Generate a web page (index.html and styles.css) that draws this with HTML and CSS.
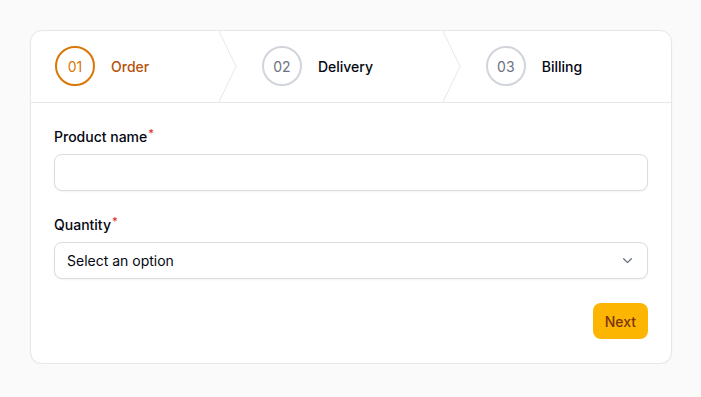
FILE: index.html
```html
<!DOCTYPE html>
<html lang="en">
<head>
    <meta charset="UTF-8">
    <title>Order wizard</title>
    <link rel="stylesheet" href="styles.css">
</head>
<body>
<div class="wizard">
    <ol class="steps">
        <li class="step active">
            <span class="num">01</span>
            <span class="step-label">Order</span>
            <svg class="sep" fill="none" preserveAspectRatio="none" viewBox="0 0 22 80"><path d="M0 -2L20 40L0 82" stroke="currentColor" stroke-linejoin="round" vector-effect="non-scaling-stroke"></path></svg>
        </li>
        <li class="step">
            <span class="num">02</span>
            <span class="step-label">Delivery</span>
            <svg class="sep" fill="none" preserveAspectRatio="none" viewBox="0 0 22 80"><path d="M0 -2L20 40L0 82" stroke="currentColor" stroke-linejoin="round" vector-effect="non-scaling-stroke"></path></svg>
        </li>
        <li class="step">
            <span class="num">03</span>
            <span class="step-label">Billing</span>
        </li>
    </ol>

    <form class="body" onsubmit="return false">
        <label class="field">
            <span class="label">Product name<sup>*</sup></span>
            <input class="input" type="text" name="product">
        </label>

        <label class="field">
            <span class="label">Quantity<sup>*</sup></span>
            <span class="select-wrap">
                <select class="input select" name="quantity">
                    <option selected>Select an option</option>
                    <option>1</option>
                    <option>2</option>
                    <option>3</option>
                </select>
                <svg class="chevron" viewBox="0 0 20 20" fill="none"><path d="M5.5 8l4.5 4.5L14.5 8" stroke="currentColor" stroke-width="1.6" stroke-linecap="round" stroke-linejoin="round"/></svg>
            </span>
        </label>

        <div class="actions">
            <button type="submit" class="btn">Next</button>
        </div>
    </form>
</div>
</body>
</html>
```

FILE: styles.css
```css
*{
    box-sizing: border-box;
}
body{
    margin: 0;
    background-color: #fafafa;
    font-family: Inter, "Noto Sans", sans-serif;
    color: #030712;
    padding: 30px 29px 0 30px;
}
.wizard{
    background-color: #fff;
    border: 1px solid #e5e7eb;
    border-radius: 12px;
    box-shadow: 0 1px 2px rgba(0,0,0,.04);
    width: 642px;
}
.steps{
    display: grid;
    grid-auto-flow: column;
    margin: 0;
    padding: 0;
    list-style: none;
    border-bottom: 1px solid #e5e7eb;
}
.step{
    position: relative;
    display: flex;
    align-items: center;
    gap: 16px;
    padding: 15px 24px 16px;
    font-size: 14px;
    font-weight: 500;
}
.num{
    display: flex;
    align-items: center;
    justify-content: center;
    width: 40px;
    height: 40px;
    border: 2px solid #d1d5db;
    border-radius: 50%;
    color: #6b7280;
    font-size: 14px;
    font-weight: 400;
}
.step-label{
    color: #030712;
}
.step.active .num{
    border-color: #d97706;
    color: #d97706;
}
.step.active .step-label{
    color: #b45309;
}
.sep{
    position: absolute;
    top: 0;
    right: 0;
    width: 20px;
    height: 100%;
    color: #e5e7eb;
}
.body{
    display: flex;
    flex-direction: column;
    gap: 24px;
    padding: 24px 23px 24px;
}
.field{
    display: flex;
    flex-direction: column;
    gap: 7px;
}
.label{
    font-size: 14px;
    font-weight: 500;
    line-height: 20px;
}
.label sup{
    color: #dc2626;
    font-size: 11px;
    margin-left: 1px;
    vertical-align: 5px;
    line-height: 0;
}
.input{
    width: 100%;
    height: 37px;
    border: 1px solid #dcdcde;
    border-radius: 8px;
    box-shadow: 0 1px 2px rgba(0,0,0,.05);
    background-color: #fff;
    font-family: inherit;
    font-size: 14px;
    color: #030712;
    padding: 0 12px;
    outline: none;
}
.select-wrap{
    position: relative;
    display: block;
}
.select{
    appearance: none;
    -webkit-appearance: none;
}
.chevron{
    position: absolute;
    right: 12px;
    top: 10px;
    width: 17px;
    height: 17px;
    color: #6b7280;
    pointer-events: none;
}
.actions{
    display: flex;
    justify-content: flex-end;
}
.btn{
    background-color: #fcb500;
    color: #7c340c;
    border: none;
    border-radius: 8px;
    height: 36px;
    padding: 0 12px;
    font-family: inherit;
    font-size: 14px;
    font-weight: 500;
    cursor: pointer;
}
```
